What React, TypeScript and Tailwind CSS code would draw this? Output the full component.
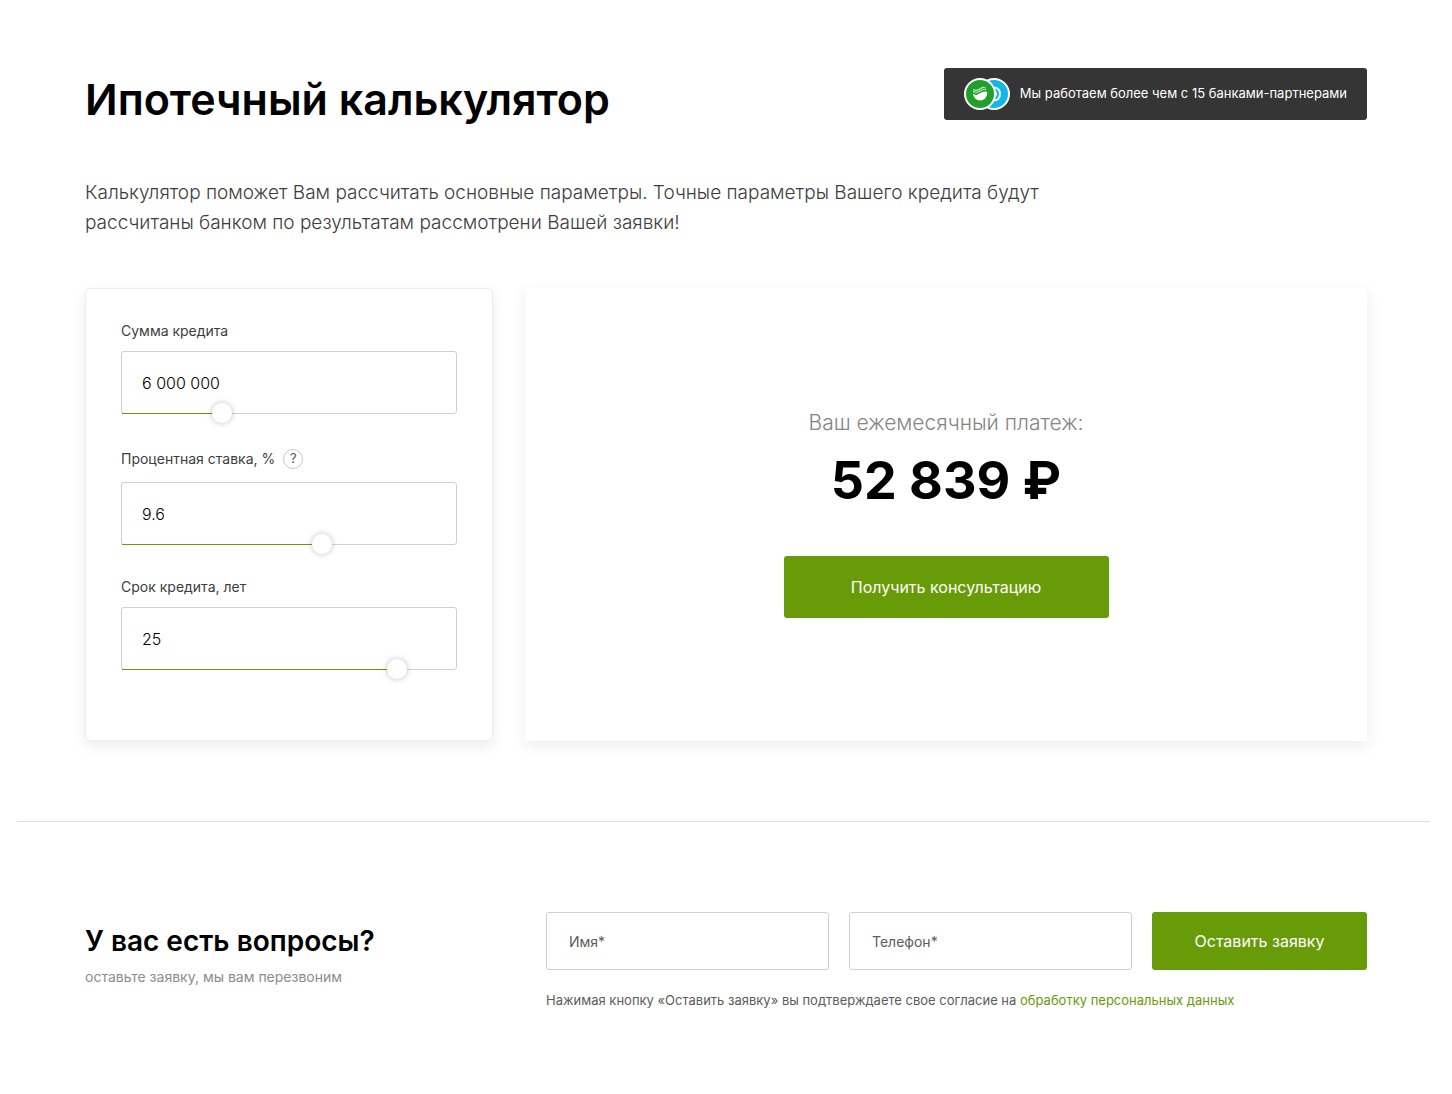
import { useState } from "react";

interface FieldProps {
  id: string;
  label: string;
  value: number;
  min: number;
  max: number;
  step: number;
  hint?: boolean;
  onChange: (value: number) => void;
}

function SliderField({ id, label, value, min, max, step, hint, onChange }: FieldProps) {
  const percent = ((value - min) / (max - min)) * 100;

  const handleText = (e: React.ChangeEvent<HTMLInputElement>) => {
    const next = Number(e.target.value.replace(/\s/g, ""));
    if (!Number.isNaN(next)) onChange(Math.min(next, max));
  };

  return (
    <div>
      <div className={hint ? "flex h-[26px] items-center gap-2" : "flex h-5 items-center"}>
        <label htmlFor={id} className="text-[14px] leading-5 text-[#3d3d3d]">{label}</label>
        {hint && (
          <button type="button" aria-label="Подсказка" className="flex h-5 w-5 items-center justify-center rounded-full border border-[#c8c8c8] text-[13px] text-[#555]">
            ?
          </button>
        )}
      </div>
      <div className="relative mt-2.5">
        <input
          id={id}
          type="text"
          value={value.toLocaleString("en-US").replace(/,/g, " ")}
          onChange={handleText}
          className="block h-[63px] w-full rounded-[3px] border border-[#d0d0d0] bg-white px-5 text-base font-light text-black outline-none focus:border-[#a8a8a8]"
        />
        <div className="absolute inset-x-px bottom-0 h-px">
          <div className="h-full bg-[#689b08]" style={{ width: `${percent}%` }} />
        </div>
        <input
          type="range"
          aria-label={label}
          min={min}
          max={max}
          step={step}
          value={value}
          onChange={(e) => onChange(Number(e.target.value))}
          className="absolute -bottom-[9px] -left-2.5 h-5 w-[calc(100%+20px)] cursor-pointer appearance-none bg-transparent outline-none pointer-events-none [&::-webkit-slider-thumb]:pointer-events-auto [&::-webkit-slider-thumb]:h-5 [&::-webkit-slider-thumb]:w-5 [&::-webkit-slider-thumb]:appearance-none [&::-webkit-slider-thumb]:rounded-full [&::-webkit-slider-thumb]:bg-white [&::-webkit-slider-thumb]:shadow-[0_0_6px_rgba(0,0,0,0.25)]"
        />
      </div>
    </div>
  );
}

function BankLogos() {
  return (
    <svg width="46" height="32" viewBox="0 0 46 32" className="shrink-0" aria-hidden="true">
      <circle cx="30" cy="16" r="15" fill="#0fb8e8" stroke="#fff" strokeWidth="2" />
      <path d="M29 9.5c4.600 0 7 2.800 7 6.500s-2.400 6.500-7 6.500" fill="none" stroke="#fff" strokeWidth="1.800" />
      <path d="M29 12.500c2.300 0 3.500 1.300 3.500 3.500s-1.200 3.500-3.500 3.500" fill="none" stroke="#fff" strokeWidth="1" />
      <circle cx="16" cy="16" r="15" fill="#1fa02b" stroke="#fff" strokeWidth="2" />
      <path d="M9.100 15.600c1.500 1.500 3.200 1.600 5 .7 2.700-1.300 5-3.200 8.700-2.700.2.600.3 1.200.3 1.900a7 7 0 0 1-14 .1z" fill="#fff" />
      <path d="M9.300 13.400c2.400 1.600 4.300 1 6.300-.1 2-1.200 3.800-2.300 6.900-1.700M9.300 11.500c2.400 1.500 4.200.8 6.100-.3 1.900-1.100 3.400-2.100 6.100-1.600" fill="none" stroke="#fff" strokeWidth="1.200" strokeDasharray="1.500 .5" />
    </svg>
  );
}

export default function App() {
  const [amount, setAmount] = useState(6000000);
  const [rate, setRate] = useState(9.6);
  const [years, setYears] = useState(25);

  // аннуитетный платеж
  const months = years * 12;
  const monthly = rate / 1200;
  const annuity = monthly > 0 ? (amount * monthly) / (1 - Math.pow(1 + monthly, -months)) : amount / months;
  const payment = Math.round(annuity);

  return (
    <main className="min-h-screen bg-white font-['Inter','Open_Sans',sans-serif] text-black">
      <section className="px-[85px] pt-[68px] pb-20">
        <div className="flex items-start justify-between">
          <h1 className="pt-1 text-[43px] leading-[54px] font-semibold">Ипотечный калькулятор</h1>
          <div className="flex h-[52px] items-center gap-2.5 rounded-[3px] bg-[#353535] pr-5 pl-5 text-[13px] text-white">
            <BankLogos />
            <span>Мы работаем более чем с 15 банками-партнерами</span>
          </div>
        </div>

        <p className="mt-[52px] max-w-[1000px] text-[19px] leading-[30px] font-light text-[#3d3d3d]">
          Калькулятор поможет Вам рассчитать основные параметры. Точные параметры Вашего кредита будут рассчитаны банком по результатам рассмотрени Вашей заявки!
        </p>

        <div className="mt-[50px] flex gap-8">
          <div className="flex w-[408px] shrink-0 flex-col gap-8 rounded-[5px] border border-[#ececec] px-[35px] pt-8 pb-[70px] shadow-[0_5px_15px_rgba(0,0,0,0.08)]">
            <SliderField id="amount" label="Сумма кредита" value={amount} min={0} max={20000000} step={100000} onChange={setAmount} />
            <SliderField id="rate" label="Процентная ставка, %" value={rate} min={0.1} max={16} step={0.1} hint onChange={setRate} />
            <SliderField id="years" label="Срок кредита, лет" value={years} min={2} max={30} step={1} onChange={setYears} />
          </div>

          <div className="flex flex-1 flex-col items-center justify-center shadow-[0_5px_15px_rgba(0,0,0,0.08)]">
            <div className="text-[21px] leading-6 font-light text-[#858585]">Ваш ежемесячный платеж:</div>
            <div className="mt-4 text-[52px] leading-[60px] font-bold">
              {payment.toLocaleString("en-US").replace(/,/g, " ")} ₽
            </div>
            <button type="button" className="mt-[45px] h-[62px] w-[325px] rounded-[3px] bg-[#689b08] text-base text-white hover:bg-[#5c8a07]">
              Получить консультацию
            </button>
          </div>
        </div>
      </section>

      <hr className="mr-[22px] ml-[17px] border-[#e0e0e0]" />

      <section className="flex items-start px-[85px] pt-[90px] pb-[84px]">
        <div className="w-[461px] shrink-0 pt-2.5">
          <h2 className="text-[28px] leading-[38px] font-semibold">У вас есть вопросы?</h2>
          <p className="mt-[7px] text-[14px] leading-5 text-[#8c8c8c]">оставьте заявку, мы вам перезвоним</p>
        </div>
        <form className="flex-1" onSubmit={(e) => e.preventDefault()}>
          <div className="flex gap-5">
            <input type="text" aria-label="Имя" placeholder="Имя*" className="h-[58px] min-w-0 flex-1 rounded-[3px] border border-[#d0d0d0] px-[22px] text-[14px] outline-none placeholder:text-[#5c5c5c]" />
            <input type="tel" aria-label="Телефон" placeholder="Телефон*" className="h-[58px] min-w-0 flex-1 rounded-[3px] border border-[#d0d0d0] px-[22px] text-[14px] outline-none placeholder:text-[#5c5c5c]" />
            <button type="submit" className="h-[58px] w-[215px] rounded-[3px] bg-[#689b08] text-base text-white hover:bg-[#5c8a07]">
              Оставить заявку
            </button>
          </div>
          <p className="mt-5 text-[13px] leading-5 text-[#5c5c5c]">
            Нажимая кнопку «Оставить заявку» вы подтверждаете свое согласие на{" "}
            <a href="#" className="text-[#689b08]">обработку персональных данных</a>
          </p>
        </form>
      </section>
    </main>
  );
}
